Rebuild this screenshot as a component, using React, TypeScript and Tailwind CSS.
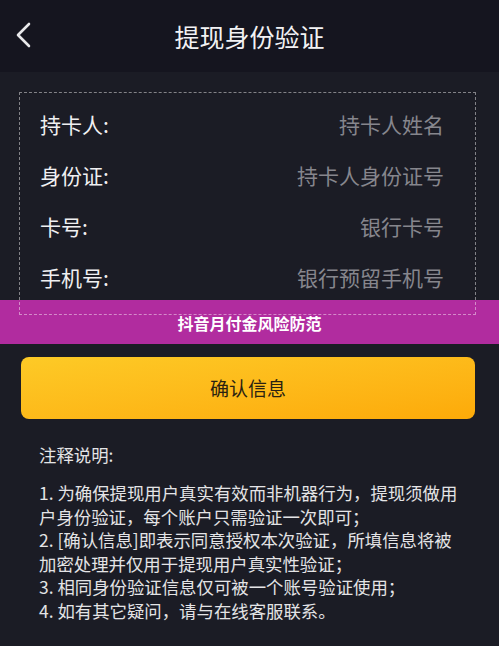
const rows = [
  { label: "持卡人:", placeholder: "持卡人姓名" },
  { label: "身份证:", placeholder: "持卡人身份证号" },
  { label: "卡号:", placeholder: "银行卡号" },
  { label: "手机号:", placeholder: "银行预留手机号" },
];

const notes = [
  "1. 为确保提现用户真实有效而非机器行为，提现须做用",
  "户身份验证，每个账户只需验证一次即可；",
  "2. [确认信息]即表示同意授权本次验证，所填信息将被",
  "加密处理并仅用于提现用户真实性验证；",
  "3. 相同身份验证信息仅可被一个账号验证使用；",
  "4. 如有其它疑问，请与在线客服联系。",
];

export default function App() {
  return (
    <div
      className="relative w-[499px] h-[646px] overflow-hidden bg-[#1b1c25]"
      style={{ fontFamily: '"Noto Sans CJK SC", "Noto Sans", sans-serif' }}
    >
      {/* Header */}
      <div className="relative flex h-[72px] items-center justify-center bg-[#15151f]">
        <svg
          className="absolute left-[15px] top-[22px]"
          width="18"
          height="26"
          viewBox="0 0 18 26"
          fill="none"
        >
          <path d="M14 2 L3 13 L14 24" stroke="#e8e8ea" strokeWidth="2.6" strokeLinecap="round" strokeLinejoin="round" />
        </svg>
        <h1 className="text-[25px] leading-none text-[#f2f2f4]">提现身份验证</h1>
      </div>

      {/* Band overlay */}
      <div className="absolute left-0 top-[300px] flex h-[44px] w-full items-center justify-center bg-[#b12c9f] pt-[2px]">
        <span className="text-[16px] font-bold text-white">抖音月付金风险防范</span>
      </div>

      {/* Form */}
      <div className="relative z-10 ml-[19px] mr-[23px] mt-[20px] border border-dashed border-white/45 pb-[11px] pl-[20px] pr-[31px] pt-[6px]">
        {rows.map((r) => (
          <div key={r.label} className="flex h-[51px] items-center justify-between text-[21px]">
            <span className="text-[#f0f0f2]">{r.label}</span>
            <span className="text-[#86868d]">{r.placeholder}</span>
          </div>
        ))}
      </div>

      {/* Button */}
      <div className="relative z-10 ml-[21px] mr-[24px] mt-[42px]">
        <button className="flex h-[62px] w-full items-center justify-center rounded-[8px] bg-gradient-to-br from-[#fdca26] to-[#fdaa08] text-[19px] text-[#2a2211]">
          确认信息
        </button>
      </div>

      {/* Notes */}
      <div className="ml-[39px] mt-[24px] text-[#e4e4e6]">
        <p className="text-[17.4px] leading-[24px]">注释说明:</p>
        <div className="mt-[14px] text-[17.4px] leading-[23.6px]">
          {notes.map((n) => (
            <p key={n} className="whitespace-nowrap">{n}</p>
          ))}
        </div>
      </div>
    </div>
  );
}
